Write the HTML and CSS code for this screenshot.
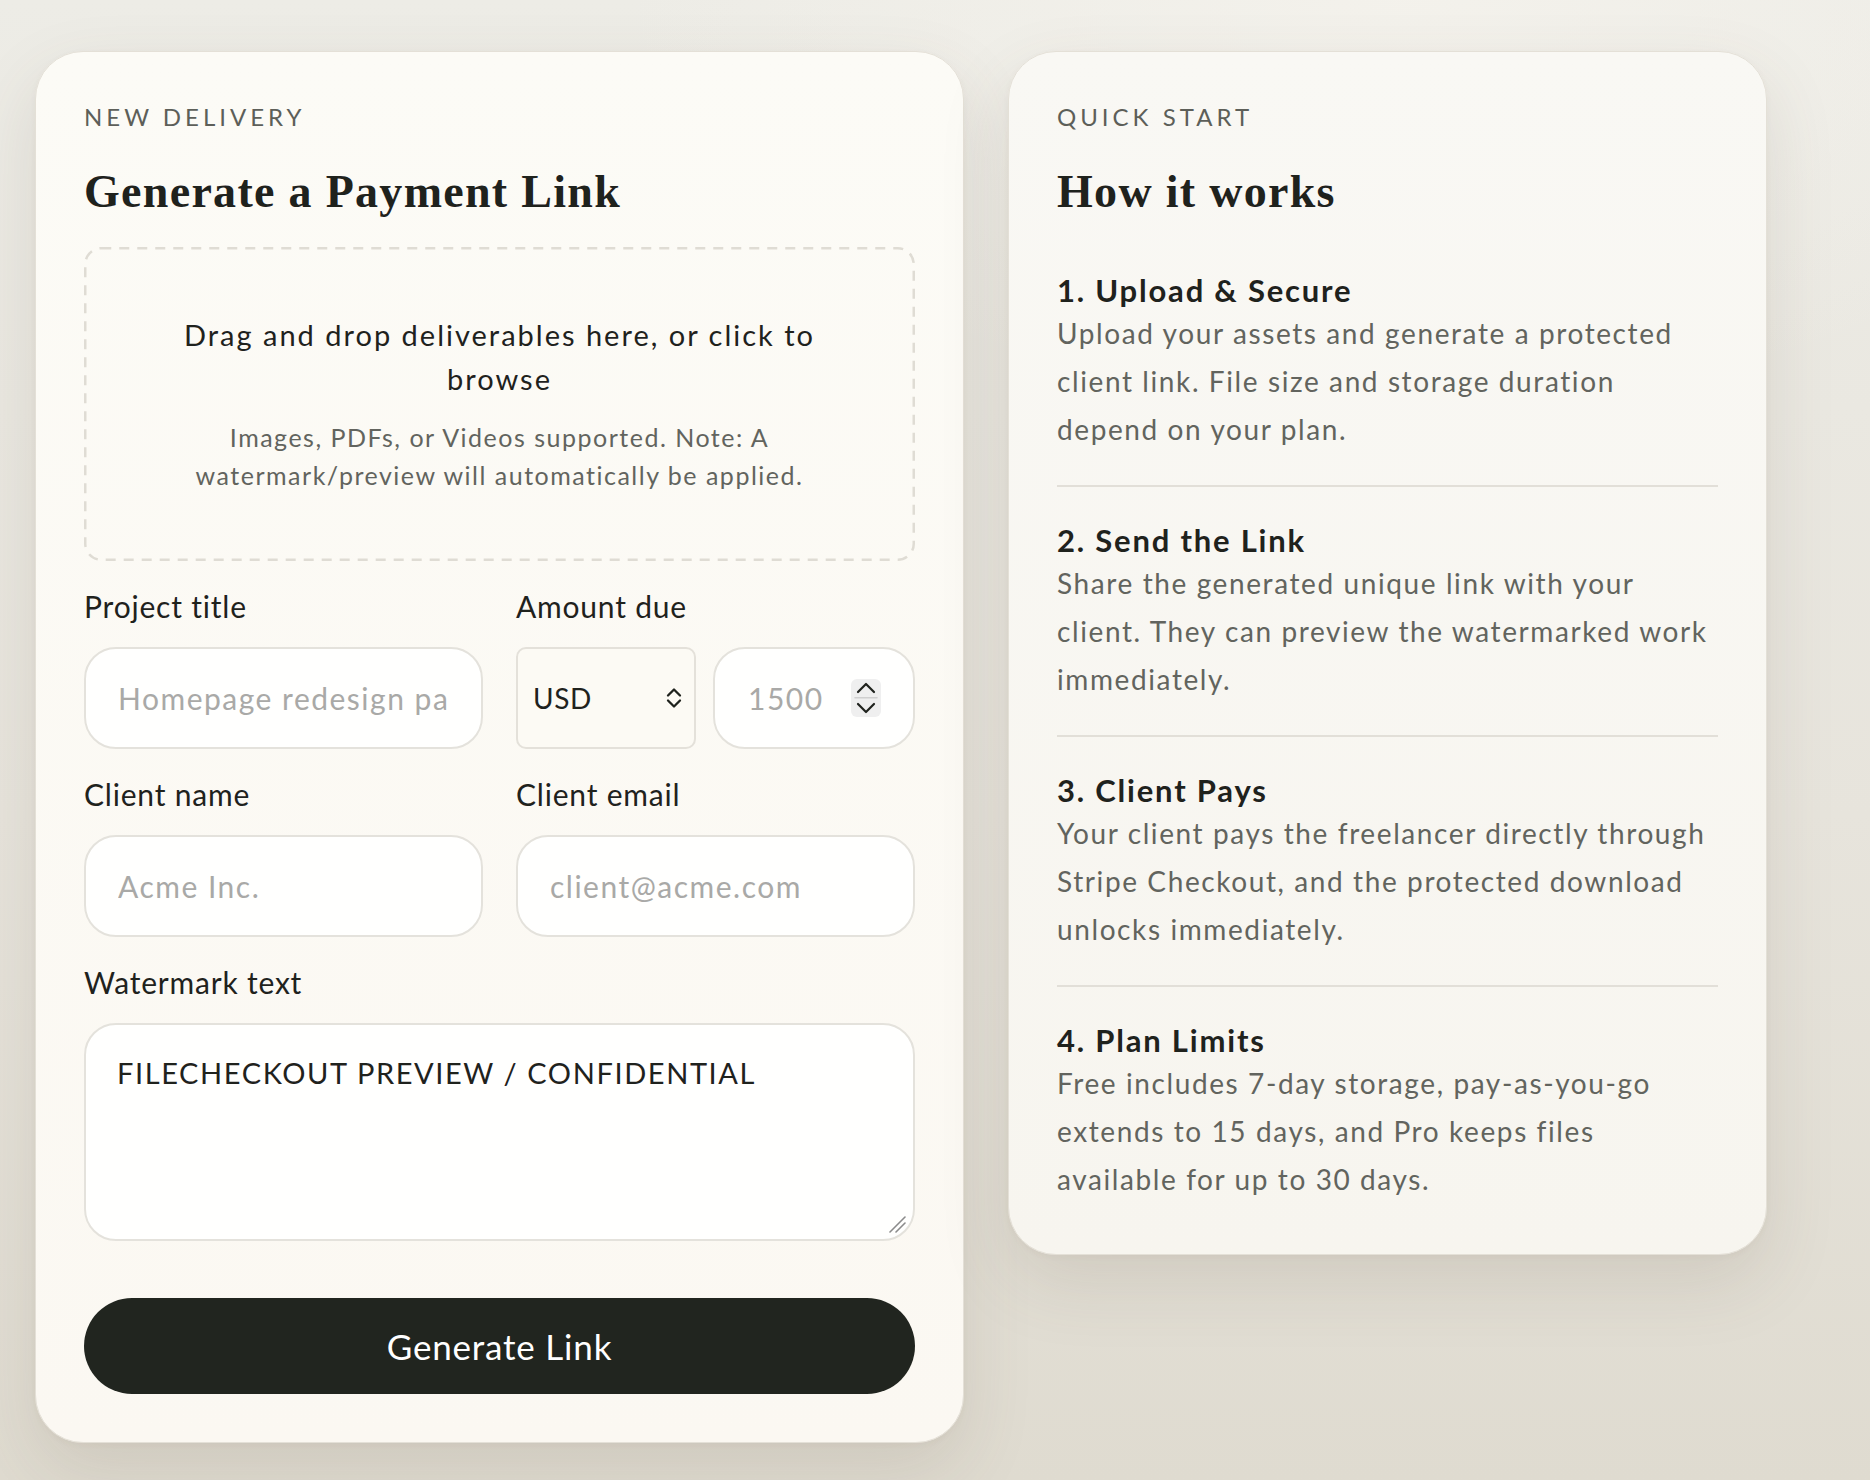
FILE: index.html
```html
<!DOCTYPE html>
<html lang="en">
<head>
<meta charset="utf-8">
<title>Generate a Payment Link</title>
<link rel="stylesheet" href="styles.css">
</head>
<body>
<main class="page">
  <section class="card card-form">
    <p class="eyebrow">New delivery</p>
    <h1 class="title">Generate a Payment Link</h1>
    <form class="form">
      <div class="dropzone">
        <svg class="dropzone-border" viewBox="0 0 831 314" preserveAspectRatio="none" aria-hidden="true"><rect x="1.25" y="1.25" width="828.5" height="311.5" rx="16" ry="16" fill="none" stroke="#dfdcd4" stroke-width="2.5" stroke-dasharray="10 8"/></svg>
        <p class="drop-main">Drag and drop deliverables here, or click to browse</p>
        <p class="drop-sub">Images, PDFs, or Videos supported. Note: A watermark/preview will automatically be applied.</p>
      </div>
      <div class="row">
        <div class="field">
          <label class="label" for="title">Project title</label>
          <input class="input" id="title" type="text" placeholder="Homepage redesign package">
        </div>
        <div class="field">
          <label class="label" for="amount">Amount due</label>
          <div class="amount">
            <div class="select">
              <select class="select-native" aria-label="Currency"><option>USD</option></select>
              <svg class="select-icon" width="16" height="24" viewBox="0 0 16 24" fill="none" stroke="#1f221d" stroke-width="2.3" stroke-linecap="round" stroke-linejoin="round"><path d="M2 9.5l6-6 6 6"/><path d="M2 14.5l6 6 6-6"/></svg>
            </div>
            <div class="number">
              <input class="number-native" id="amount" type="text" placeholder="1500">
              <span class="spin">
                <svg width="30" height="38" viewBox="0 0 30 38" fill="none" stroke-linecap="round" stroke-linejoin="round"><path d="M7 13l8-8 8 8" stroke="#1f221d" stroke-width="2.2"/><path d="M4 18.7h22" stroke="#cfcfcf" stroke-width="1.6"/><path d="M7 25l8 8 8-8" stroke="#1f221d" stroke-width="2.2"/></svg>
              </span>
            </div>
          </div>
        </div>
      </div>
      <div class="row">
        <div class="field">
          <label class="label" for="cname">Client name</label>
          <input class="input" id="cname" type="text" placeholder="Acme Inc.">
        </div>
        <div class="field">
          <label class="label" for="cemail">Client email</label>
          <input class="input" id="cemail" type="email" placeholder="client@acme.com">
        </div>
      </div>
      <div class="field">
        <label class="label" for="wm">Watermark text</label>
        <div class="textarea-wrap">
          <textarea class="textarea" id="wm">FILECHECKOUT PREVIEW / CONFIDENTIAL</textarea>
          <svg class="grip" width="18" height="18" viewBox="0 0 18 18" fill="none" stroke="#8b8b8b" stroke-width="1.6" stroke-linecap="round" aria-hidden="true"><path d="M2 17L17 2"/><path d="M8 17l9-9"/></svg>
        </div>
      </div>
      <button class="button" type="button">Generate Link</button>
    </form>
  </section>

  <section class="card card-info">
    <p class="eyebrow">Quick start</p>
    <h2 class="title">How it works</h2>
    <ol class="steps">
      <li class="step">
        <h3 class="step-title">1. Upload &amp; Secure</h3>
        <p class="step-body">Upload your assets and generate a protected<br>client link. File size and storage duration<br>depend on your plan.</p>
      </li>
      <li class="step">
        <h3 class="step-title">2. Send the Link</h3>
        <p class="step-body">Share the generated unique link with your<br>client. They can preview the watermarked work<br>immediately.</p>
      </li>
      <li class="step">
        <h3 class="step-title">3. Client Pays</h3>
        <p class="step-body">Your client pays the freelancer directly through<br>Stripe Checkout, and the protected download<br>unlocks immediately.</p>
      </li>
      <li class="step">
        <h3 class="step-title">4. Plan Limits</h3>
        <p class="step-body">Free includes 7-day storage, pay-as-you-go<br>extends to 15 days, and Pro keeps files<br>available for up to 30 days.</p>
      </li>
    </ol>
  </section>
</main>
</body>
</html>
```

FILE: styles.css
```css
* {
  box-sizing: border-box;
  margin: 0;
  padding: 0;
}

html, body {
  min-height: 100%;
}

body {
  font-family: Lato, "Noto Sans", sans-serif;
  color: #1f221d;
  min-height: 1480px;
  background:
    radial-gradient(ellipse 60% 40% at 75% 0%, rgba(244, 242, 236, 0.9), rgba(244, 242, 236, 0) 70%),
    linear-gradient(180deg, #edece6 0%, #e7e4dc 55%, #dfdbd0 100%);
}

.page {
  display: grid;
  grid-template-columns: 929px 759px;
  column-gap: 44px;
  align-items: start;
  padding: 51px 0 0 35px;
}

.card {
  border: 1px solid #e4e0d7;
  border-radius: 48px;
  padding: 48px;
  box-shadow: 0 28px 70px rgba(90, 80, 60, 0.13), 0 2px 6px rgba(90, 80, 60, 0.04);
}

.card-form {
  background: linear-gradient(180deg, #fcfbf6 0%, #fbf8f2 100%);
}

.card-info {
  background: linear-gradient(180deg, #f9f8f4 0%, #f7f5ef 100%);
}

.eyebrow {
  font-size: 24px;
  line-height: 34px;
  letter-spacing: 4px;
  text-transform: uppercase;
  color: #5d5f59;
}

.title {
  font-family: "Liberation Serif", "Times New Roman", serif;
  font-weight: 700;
  font-size: 46px;
  line-height: 54px;
  letter-spacing: 1.3px;
  margin-top: 31px;
  color: #1f221d;
}

/* ---------- form card ---------- */

.form {
  display: flex;
  flex-direction: column;
  gap: 25px;
  margin-top: 28px;
}

.dropzone {
  position: relative;
  border-radius: 16px;
  padding: 66px 74px 67px;
  text-align: center;
}

.dropzone-border {
  position: absolute;
  inset: 0;
  width: 100%;
  height: 100%;
  pointer-events: none;
}

.drop-main {
  font-size: 29px;
  line-height: 44px;
  letter-spacing: 2px;
  color: #1f221d;
}

.drop-sub {
  margin-top: 17px;
  font-size: 25px;
  line-height: 38px;
  letter-spacing: 1.5px;
  color: #62645e;
}

.row {
  display: grid;
  grid-template-columns: 1fr 1fr;
  column-gap: 33px;
}

.field {
  display: flex;
  flex-direction: column;
  gap: 21px;
  min-width: 0;
}

.label {
  font-size: 30px;
  line-height: 40px;
  letter-spacing: 0.8px;
  color: #1f221d;
}

.input {
  width: 100%;
  height: 102px;
  border: 2px solid #e4e2dc;
  border-radius: 32px;
  background: #fffffe;
  padding: 0 32px;
  font-family: inherit;
  font-size: 30px;
  letter-spacing: 1.5px;
  color: #1f221d;
  outline: none;
}

.input::placeholder,
.number-native::placeholder {
  color: #a9a9a7;
}

.amount {
  display: flex;
  gap: 17px;
}

.select {
  flex: 0 0 180px;
  height: 102px;
  display: flex;
  align-items: center;
  border: 2px solid #e4e1da;
  border-radius: 10px;
  background: #fcfaf4;
  padding: 0 12px 0 15px;
}

.select-native {
  flex: 1;
  min-width: 0;
  appearance: none;
  -webkit-appearance: none;
  border: 0;
  background: transparent;
  font-family: inherit;
  font-size: 28px;
  letter-spacing: 0.6px;
  color: #1f221d;
  outline: none;
}

.select-icon {
  flex: none;
}

.number {
  flex: 1;
  min-width: 0;
  height: 102px;
  display: flex;
  align-items: center;
  border: 2px solid #e4e2dc;
  border-radius: 32px;
  background: #fffffe;
  padding: 0 32px 0 33px;
}

.number-native {
  flex: 1;
  min-width: 0;
  border: 0;
  background: transparent;
  font-family: inherit;
  font-size: 30px;
  letter-spacing: 1.5px;
  color: #1f221d;
  outline: none;
}

.spin {
  flex: none;
  display: flex;
  width: 30px;
  height: 38px;
  border-radius: 6px;
  background: #efefef;
}

.textarea-wrap {
  position: relative;
}

.textarea {
  display: block;
  width: 100%;
  height: 218px;
  border: 2px solid #e4e2dc;
  border-radius: 32px;
  background: #fffffe;
  padding: 28px 31px;
  font-family: inherit;
  font-size: 29px;
  line-height: 40px;
  letter-spacing: 1.6px;
  color: #1f221d;
  outline: none;
  resize: none;
}

.grip {
  position: absolute;
  right: 9px;
  bottom: 8px;
  pointer-events: none;
}

.button {
  margin-top: 32px;
  height: 96px;
  border: 0;
  border-radius: 48px;
  background: #21251f;
  color: #ffffff;
  font-family: inherit;
  font-size: 35px;
  letter-spacing: 0.8px;
  cursor: pointer;
}

/* ---------- info card ---------- */

.card-info .title {
  margin-bottom: 18px;
}

.steps {
  list-style: none;
}

.step {
  padding: 34px 0 32px;
  border-top: 2px solid #e2dfd8;
}

.step:first-child {
  border-top: 0;
}

.step:last-child {
  padding-bottom: 3px;
}

.step-title {
  font-size: 31px;
  line-height: 38px;
  font-weight: 700;
  letter-spacing: 1.8px;
  color: #1f221d;
}

.step-body {
  white-space: nowrap;
  font-size: 28px;
  line-height: 48px;
  letter-spacing: 1.6px;
  color: #62645e;
}
```
